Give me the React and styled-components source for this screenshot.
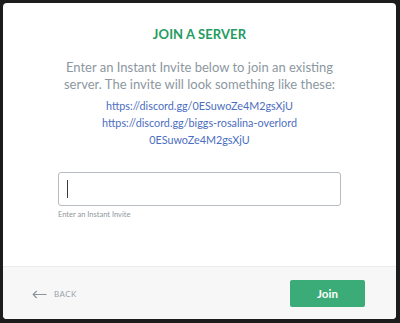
import React from "react";
import styled, { createGlobalStyle } from "styled-components";

const GlobalStyle = createGlobalStyle`
	html, body {
		margin: 0;
		padding: 0;
		background: #1c1c1c;
	}
	body {
		font-family: Lato, "Open Sans", sans-serif;
	}
`;

const invites = [
	"https://discord.gg/0ESuwoZe4M2gsXjU",
	"https://discord.gg/biggs-rosalina-overlord",
	"0ESuwoZe4M2gsXjU",
];

function App() {
	return (
		<>
			<GlobalStyle />
			<Frame>
				<Modal>
					<Body>
						<Title>Join a Server</Title>
						<Description>
							Enter an Instant Invite below to join an existing server. The invite will look
							something like these:
						</Description>
						<Examples>
							{invites.map((invite) => (
								<Example key={invite}>{invite}</Example>
							))}
						</Examples>
						<Field>
							<InputWrap>
								<Input />
								<Caret />
							</InputWrap>
							<Hint>Enter an Instant Invite</Hint>
						</Field>
					</Body>
					<Footer>
						<BackButton>
							<svg width="15" height="9" viewBox="0 0 15 9" fill="none">
								<path
									d="M14.5 4.5H1.2M4.7 1L1.2 4.5L4.7 8"
									stroke="#8a949c"
									strokeWidth="1.2"
								/>
							</svg>
							Back
						</BackButton>
						<JoinButton>Join</JoinButton>
					</Footer>
				</Modal>
			</Frame>
		</>
	);
}

export default App;

const Frame = styled.div`
	width: 400px;
	height: 323px;
	box-sizing: border-box;
	padding: 3px 4px 4px 3px;
	display: flex;
`;

const Modal = styled.div`
	flex: 1;
	background: #fff;
	border-radius: 4px;
	display: flex;
	flex-direction: column;
	overflow: hidden;
`;

const Body = styled.div`
	flex: 1;
	display: flex;
	flex-direction: column;
	align-items: center;
	padding: 23px 55px 0;
`;

const Title = styled.h2`
	margin: 0;
	font-size: 13px;
	font-weight: 700;
	text-transform: uppercase;
	color: #249c5f;
	letter-spacing: 0.1px;
	line-height: 16px;
`;

const Description = styled.p`
	margin: 17px 0 0;
	font-size: 13px;
	line-height: 17px;
	color: #8c979f;
	text-align: center;
`;

const Examples = styled.div`
	margin-top: 4px;
	display: flex;
	flex-direction: column;
	align-items: center;
`;

const Example = styled.div`
	font-size: 10.8px;
	line-height: 17px;
	color: #4c6ec0;
`;

const Field = styled.div`
	margin-top: 24px;
	align-self: stretch;
	display: flex;
	flex-direction: column;
`;

const InputWrap = styled.div`
	position: relative;
	display: flex;
`;

const Input = styled.input`
	flex: 1;
	height: 34px;
	box-sizing: border-box;
	border: 1px solid #b6bcc1;
	border-radius: 3px;
	padding: 0 8px;
	font-family: Lato, sans-serif;
	font-size: 16px;
	color: #555;
	outline: none;
`;

const Caret = styled.span`
	position: absolute;
	left: 9px;
	top: 8px;
	width: 1px;
	height: 18px;
	background: #3a3a3a;
`;

const Hint = styled.div`
	margin-top: 4px;
	font-size: 7.5px;
	color: #8e969c;
`;

const Footer = styled.div`
	height: 52px;
	background: #f7f7f7;
	border-top: 1px solid #ececec;
	display: flex;
	align-items: center;
	justify-content: space-between;
	padding: 0 31px 0 29px;
`;

const BackButton = styled.div`
	display: flex;
	align-items: center;
	gap: 7px;
	font-size: 8px;
	letter-spacing: 0.4px;
	text-transform: uppercase;
	color: #9aa2a8;
	margin-top: 2px;
`;

const JoinButton = styled.button`
	width: 75px;
	height: 27px;
	border: none;
	border-radius: 2px;
	background: #3bab77;
	color: #fff;
	font-family: Lato, sans-serif;
	font-size: 11.5px;
	font-weight: 700;
	cursor: pointer;
`;
